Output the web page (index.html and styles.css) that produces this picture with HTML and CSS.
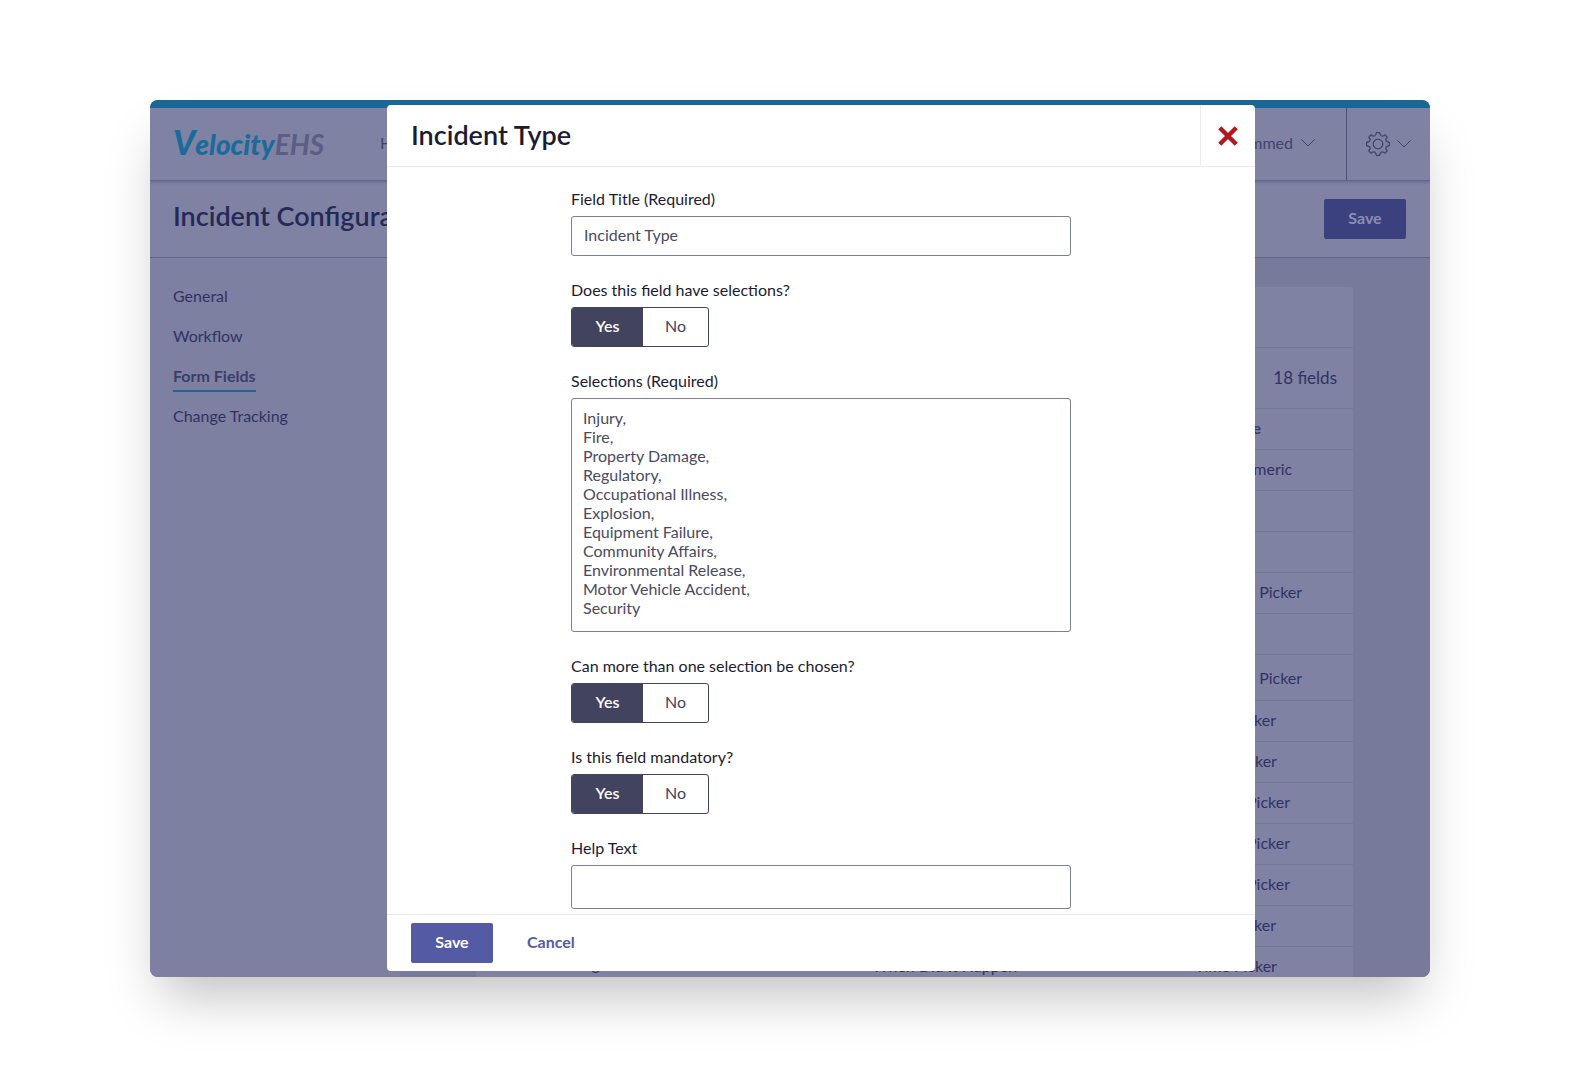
FILE: index.html
```html
<!DOCTYPE html>
<html lang="en">
<head>
	<meta charset="UTF-8">
	<title>Incident Configuration</title>
	<link rel="stylesheet" href="styles.css">
</head>
<body>
	<div class="window">
		<header class="topbar">
			<a class="logo" href="#"><span class="logo-v">V</span><span class="logo-name">elocity</span><span class="logo-ehs">EHS</span></a>
			<nav class="topnav">
				<a href="#">Home</a>
			</nav>
			<button type="button" class="user-menu">
				Mohammed
				<svg class="chevron" viewBox="0 0 14 8"><path d="M0.5 0.5 L7 7 L13.5 0.5"/></svg>
			</button>
			<button type="button" class="settings-menu" aria-label="Settings">
				<svg class="gear" viewBox="-12 -12 24 24">
					<path d="M-1.6 -11.4 H1.6 L2.4 -9 A2.4 2.4 0 0 0 5.2 -8 L6.9 -9.2 L9.2 -6.9 L8 -5.2 A2.4 2.4 0 0 0 9 -2.4 L11.4 -1.6 V1.6 L9 2.4 A2.4 2.4 0 0 0 8 5.2 L9.2 6.9 L6.9 9.2 L5.2 8 A2.4 2.4 0 0 0 2.4 9 L1.6 11.4 H-1.6 L-2.4 9 A2.4 2.4 0 0 0 -5.2 8 L-6.9 9.2 L-9.2 6.9 L-8 5.2 A2.4 2.4 0 0 0 -9 2.4 L-11.4 1.6 V-1.6 L-9 -2.4 A2.4 2.4 0 0 0 -8 -5.2 L-9.2 -6.9 L-6.9 -9.2 L-5.2 -8 A2.4 2.4 0 0 0 -2.4 -9 Z"/>
					<circle r="4.8"/>
				</svg>
				<svg class="chevron" viewBox="0 0 14 8"><path d="M0.5 0.5 L7 7 L13.5 0.5"/></svg>
			</button>
		</header>

		<div class="page-head">
			<h1>Incident Configuration</h1>
			<button type="button" class="btn btn-dim">Save</button>
		</div>

		<div class="page-body">
			<nav class="sidebar">
				<a href="#">General</a>
				<a href="#">Workflow</a>
				<a href="#" class="active">Form Fields</a>
				<a href="#">Change Tracking</a>
			</nav>
			<main class="content">
				<div class="card">
					<div class="card-head"></div>
					<div class="card-head">18 fields</div>
					<table>
						<thead>
							<tr><th class="col-drag"></th><th class="col-name"></th><th class="col-label"></th><th>Datatype</th></tr>
						</thead>
						<tbody>
							<tr><td class="col-drag"></td><td></td><td></td><td>Alphanumeric</td></tr>
							<tr><td class="col-drag"></td><td></td><td></td><td></td></tr>
							<tr><td class="col-drag"></td><td></td><td></td><td></td></tr>
							<tr><td class="col-drag"></td><td></td><td></td><td>Location Picker</td></tr>
							<tr><td class="col-drag"></td><td></td><td></td><td></td></tr>
							<tr class="tall"><td class="col-drag"></td><td></td><td></td><td>Location Picker</td></tr>
							<tr><td class="col-drag"></td><td></td><td></td><td>Date Picker</td></tr>
							<tr><td class="col-drag"></td><td></td><td></td><td>Time Picker</td></tr>
							<tr><td class="col-drag"></td><td></td><td></td><td>People Picker</td></tr>
							<tr><td class="col-drag"></td><td></td><td></td><td>People Picker</td></tr>
							<tr><td class="col-drag"></td><td></td><td></td><td>People Picker</td></tr>
							<tr><td class="col-drag"></td><td></td><td></td><td>Date Picker</td></tr>
							<tr><td class="col-drag"></td><td class="name">Incident Timing</td><td>When Did It Happen</td><td>Time Picker</td></tr>
						</tbody>
					</table>
				</div>
			</main>
		</div>

		<form class="modal" role="dialog" aria-labelledby="modal-title">
			<div class="modal-head">
				<h2 id="modal-title">Incident Type</h2>
				<button type="button" class="close" aria-label="Close">
					<svg viewBox="0 0 20 20"><path d="M2.5 2.5 L17.5 17.5 M17.5 2.5 L2.5 17.5"/></svg>
				</button>
			</div>

			<div class="modal-body">
				<div class="field">
					<label for="title">Field Title (Required)</label>
					<input type="text" id="title" name="title" value="Incident Type">
				</div>
				<fieldset class="field">
					<legend>Does this field have selections?</legend>
					<div class="toggle">
						<input type="radio" id="has-yes" name="has" checked><label for="has-yes">Yes</label>
						<input type="radio" id="has-no" name="has"><label for="has-no">No</label>
					</div>
				</fieldset>
				<div class="field">
					<label for="selections">Selections (Required)</label>
					<textarea id="selections" name="selections">Injury,
Fire,
Property Damage,
Regulatory,
Occupational Illness,
Explosion,
Equipment Failure,
Community Affairs,
Environmental Release,
Motor Vehicle Accident,
Security</textarea>
				</div>
				<fieldset class="field">
					<legend>Can more than one selection be chosen?</legend>
					<div class="toggle">
						<input type="radio" id="multi-yes" name="multi" checked><label for="multi-yes">Yes</label>
						<input type="radio" id="multi-no" name="multi"><label for="multi-no">No</label>
					</div>
				</fieldset>
				<fieldset class="field">
					<legend>Is this field mandatory?</legend>
					<div class="toggle">
						<input type="radio" id="mand-yes" name="mand" checked><label for="mand-yes">Yes</label>
						<input type="radio" id="mand-no" name="mand"><label for="mand-no">No</label>
					</div>
				</fieldset>
				<div class="field">
					<label for="help">Help Text</label>
					<input type="text" id="help" name="help" class="input-tall">
				</div>
			</div>

			<div class="modal-foot">
				<button type="submit" class="btn">Save</button>
				<button type="button" class="btn-link">Cancel</button>
			</div>
		</form>
	</div>
</body>
</html>
```
FILE: styles.css
```css
* {
	box-sizing: border-box;
}

body {
	margin: 0;
	padding: 100px 150px;
	background-color: #fff;
	color: #1b1b33;
	font-family: Lato, "Open Sans", sans-serif;
	font-size: 16px;
	line-height: 20px;
}

button, input, textarea {
	font: inherit;
	color: inherit;
}

button {
	border: none;
	padding: 0 0 2px;
	background: none;
	cursor: pointer;
}

a {
	color: inherit;
	text-decoration: none;
}

h1, h2 {
	margin: 0;
	font-size: 27px;
	line-height: 32px;
	font-weight: 600;
}

svg {
	fill: none;
	stroke: currentColor;
}

/* App window */
.window {
	position: relative;
	display: flex;
	flex-direction: column;
	height: calc(100vh - 200px);
	min-height: 600px;
	overflow: hidden;
	border-radius: 8px;
	background-color: #8082a3;
	color: #303264;
	box-shadow: 0 30px 50px -12px rgba(0, 0, 0, 0.25);
}

.topbar {
	display: flex;
	align-items: center;
	flex: none;
	height: 81px;
	padding-left: 23px;
	border-top: 8px solid #1a6697;
	border-bottom: 1px solid #62658b;
	box-shadow: 0 1px 3px rgba(40, 42, 90, 0.3);
	color: #41436f;
}

.logo {
	width: 207px;
	padding-bottom: 2px;
	font-size: 28px;
	line-height: 36px;
	font-weight: 900;
	font-style: italic;
	color: #1a6b9c;
	white-space: nowrap;
}

.logo-v {
	font-size: 34px;
}

.logo-ehs {
	font-weight: 700;
	color: #5a5d84;
}

.topnav {
	flex: 1;
	padding-bottom: 2px;
}

.chevron {
	width: 14px;
	height: 8px;
}

.user-menu {
	display: flex;
	align-items: center;
	gap: 8px;
	height: 100%;
	padding-right: 31px;
	border-right: 1px solid #4a4c79;
}

.settings-menu {
	display: flex;
	align-items: center;
	gap: 7px;
	height: 100%;
	padding: 0 19px;
}

.gear {
	width: 24px;
	height: 24px;
	stroke-width: 1.3;
	stroke-linejoin: round;
}

.page-head {
	display: flex;
	align-items: center;
	justify-content: space-between;
	flex: none;
	height: 77px;
	padding: 0 24px 0 23px;
	border-bottom: 1px solid #62658b;
}

.page-head h1 {
	margin-bottom: 6px;
	color: #262856;
}

.page-body {
	display: flex;
	flex: 1;
	min-height: 0;
}

.sidebar {
	display: flex;
	flex-direction: column;
	align-items: flex-start;
	gap: 14px;
	flex: none;
	width: 250px;
	padding: 26px 23px;
	background-color: #7e80a1;
}

.sidebar a {
	height: 26px;
	line-height: 24px;
}

.sidebar .active {
	height: 28px;
	margin-bottom: -2px;
	border-bottom: 2px solid #1a6697;
	color: #3c3e6a;
	font-weight: 700;
}

.content {
	flex: 1;
	padding: 29px 77px 0 0;
	overflow: hidden;
	background-color: #787a9b;
}

.card {
	border-radius: 3px;
	background-color: #8082a3;
}

.card-head {
	height: 61px;
	padding: 20px 16px;
	border-bottom: 1px solid #757799;
	font-size: 17px;
	text-align: right;
}

.card table {
	width: 100%;
	border-collapse: separate;
	border-spacing: 0;
	table-layout: fixed;
}

.card th, .card td {
	height: 41px;
	padding: 0 16px 2px;
	border-bottom: 1px solid #757799;
	text-align: left;
}

.card th {
	color: #343a7a;
}

.card .tall td {
	height: 46px;
	padding-bottom: 0;
}

.card .name {
	padding-bottom: 6px;
}

.card .col-drag {
	width: 76px;
	background-color: #787a9b;
}

.col-name {
	width: 380px;
}

.col-label {
	width: 323px;
}

/* Buttons */
.btn {
	width: 82px;
	height: 40px;
	border-radius: 2px;
	background-color: #545aa3;
	color: #fff;
	font-weight: 700;
}

.btn-dim {
	background-color: #3b417f;
	color: #8c8eb2;
}

.btn-link {
	color: #545aa3;
	font-weight: 700;
}

/* Modal */
.modal {
	position: absolute;
	top: 5px;
	right: 175px;
	bottom: 6px;
	left: 237px;
	display: flex;
	flex-direction: column;
	overflow: hidden;
	border-radius: 4px;
	background-color: #fff;
	color: #1b1b33;
}

.modal-head {
	display: flex;
	align-items: center;
	justify-content: space-between;
	flex: none;
	height: 62px;
	padding-left: 24px;
	border-bottom: 1px solid #ececee;
}

.modal-head h2 {
	margin-bottom: 2px;
}

.close {
	display: grid;
	place-items: center;
	width: 55px;
	height: 100%;
	padding: 0;
	border-left: 1px solid #ececee;
	color: #b3161d;
}

.close svg {
	width: 22px;
	height: 22px;
	stroke-width: 4;
}

.modal-body {
	flex: 1;
	min-height: 0;
	padding-top: 23px;
	overflow: hidden;
}

.field {
	display: block;
	width: 500px;
	max-width: 90%;
	margin: 0 auto 25px;
	padding: 0;
	border: none;
}

.field > label, .field legend {
	display: block;
	height: 18px;
	margin-bottom: 8px;
	padding: 0;
	line-height: 18px;
}

.field input[type="text"], .field textarea {
	display: block;
	width: 100%;
	height: 40px;
	padding: 0 12px 3px;
	border: 1px solid #7c7d96;
	border-radius: 3px;
	background-color: #fff;
	color: #4a4a60;
}

.field input.input-tall {
	height: 44px;
}

.field textarea {
	height: 234px;
	padding: 9px 11px;
	line-height: 19px;
	resize: none;
}

/* Yes / No switch */
.toggle {
	display: flex;
	width: 138px;
	height: 40px;
	overflow: hidden;
	border: 1px solid #41435f;
	border-radius: 3px;
}

.toggle input {
	position: absolute;
	opacity: 0;
}

.toggle label {
	flex: none;
	width: 65px;
	padding-bottom: 2px;
	line-height: 36px;
	text-align: center;
	color: #41435f;
	cursor: pointer;
}

.toggle label:first-of-type {
	width: 71px;
}

.toggle input:checked + label {
	background-color: #41435f;
	color: #fff;
	font-weight: 600;
}

.modal-foot {
	display: flex;
	align-items: center;
	gap: 34px;
	flex: none;
	height: 57px;
	padding: 0 24px;
	border-top: 1px solid #ececee;
}
```
